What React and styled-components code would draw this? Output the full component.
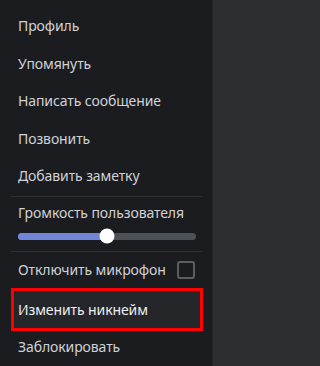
import React, { useState } from "react";
import styled, { createGlobalStyle } from "styled-components";

const Global = createGlobalStyle`
  html, body { margin: 0; padding: 0; background: #2b2d31; }
  body { width: 215px; height: 366px; overflow: hidden; }
`;

const Menu = styled.div`
  width: 213px;
  height: 366px;
  box-sizing: border-box;
  background: #1b1c1f;
  border-right: 1px solid #24262a;
  display: flex;
  flex-direction: column;
  padding: 7px 10px 0 8px;
  font-family: "Noto Sans", "Open Sans", sans-serif;
`;

const Item = styled.div`
  height: ${(p) => p.$h || 37.5}px;
  flex-shrink: 0;
  display: flex;
  align-items: center;
  justify-content: space-between;
  box-sizing: border-box;
  padding: 0 7px 0 10px;
  font-size: 14px;
  letter-spacing: -0.1px;
  color: ${(p) => (p.$active ? "#eceef1" : "#cfd2d7")};
  background: ${(p) => (p.$active ? "#25262a" : "transparent")};
  border: ${(p) => (p.$active ? "3px solid #ff0000" : "none")};
  margin: ${(p) => (p.$active ? "0 -1px 0 3px" : "0")};
  padding-left: ${(p) => (p.$active ? "4px" : "10px")};
  white-space: nowrap;
`;

const Separator = styled.div`
  height: 1px;
  flex-shrink: 0;
  background: #2c2e33;
  margin: 1px 0 0 2px;
`;

const VolumeBlock = styled.div`
  display: flex;
  flex-direction: column;
  padding: 6px 6px 10px 10px;
  gap: 6px;
`;

const Label = styled.div`
  font-size: 14px;
  letter-spacing: -0.1px;
  color: #cfd2d7;
  white-space: nowrap;
`;

const Track = styled.div`
  position: relative;
  height: 7px;
  border-radius: 4px;
  background: #4e5058;
  margin-top: 5px;
`;

const Fill = styled.div`
  height: 100%;
  border-radius: 4px;
  background: #7086d9;
`;

const Knob = styled.div`
  position: absolute;
  top: 50%;
  width: 15px;
  height: 15px;
  border-radius: 50%;
  background: #ffffff;
  transform: translate(-50%, -50%);
`;

const Checkbox = styled.div`
  width: 14px;
  height: 14px;
  border: 2px solid #5b5d64;
  border-radius: 3px;
`;

export default function App() {
  const [volume] = useState(50);
  return (
    <>
      <Global />
      <Menu>
        <Item>Профиль</Item>
        <Item>Упомянуть</Item>
        <Item>Написать сообщение</Item>
        <Item>Позвонить</Item>
        <Item>Добавить заметку</Item>
        <Separator />
        <VolumeBlock>
          <Label>Громкость пользователя</Label>
          <Track>
            <Fill style={{ width: `${volume}%` }} />
            <Knob style={{ left: `${volume}%` }} />
          </Track>
        </VolumeBlock>
        <Separator />
        <Item $h={36}>
          Отключить микрофон
          <Checkbox />
        </Item>
        <Item $active $h={43}>Изменить никнейм</Item>
        <Item $h={32}>Заблокировать</Item>
      </Menu>
    </>
  );
}
